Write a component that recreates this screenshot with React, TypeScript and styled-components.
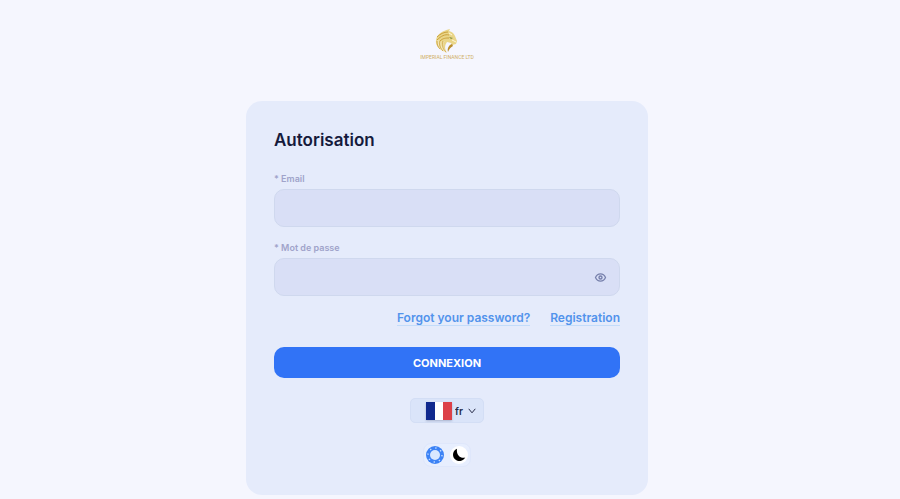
import React, { useState } from "react";
import { createGlobalStyle, styled } from "styled-components";

const GlobalStyle = createGlobalStyle`
  * {
    box-sizing: border-box;
  }
  body {
    margin: 0;
    background: #f5f6fe;
    color: #151a3c;
    font-family: Inter, "Liberation Sans", sans-serif;
  }
`;

const Page = styled.main`
  display: flex;
  flex-direction: column;
  align-items: center;
  gap: 40px;
  padding: 28px 6px 4px 0;
`;

const Logo = styled.div`
  display: flex;
  flex-direction: column;
  align-items: center;
  height: 33px;

  svg {
    width: 24px;
    height: 26px;
  }
`;

const LogoName = styled.span`
  color: #d0ae64;
  font-family: Roboto, sans-serif;
  font-size: 5px;
  line-height: 7px;
  white-space: nowrap;
`;

const Card = styled.form`
  width: 100%;
  max-width: 402px;
  padding: 28px;
  border-radius: 16px;
  background: #e5ebfb;
`;

const Title = styled.h1`
  margin: 0 0 22px;
  font-size: 17px;
  line-height: 22px;
  font-weight: 600;
`;

const Field = styled.div`
  margin-bottom: 15px;

  label {
    display: block;
    margin-bottom: 4px;
    color: #a0a3ca;
    font-size: 9px;
    line-height: 12px;
    font-weight: 600;
  }
`;

const InputWrap = styled.div`
  display: flex;
  align-items: center;
  height: 38px;
  border: 1px solid #cfd8ee;
  border-radius: 10px;
  background: #d9dff6;
`;

const Input = styled.input`
  flex: 1;
  min-width: 0;
  height: 100%;
  padding: 0 12px;
  border: 0;
  outline: none;
  background: transparent;
  color: inherit;
  font: inherit;
  font-size: 12px;
`;

const EyeButton = styled.button`
  display: flex;
  margin-right: 12px;
  padding: 0;
  border: 0;
  background: none;
  color: #7780ac;
  cursor: pointer;
`;

const Links = styled.nav`
  display: flex;
  justify-content: flex-end;
  gap: 20px;
  margin-bottom: 21px;

  a {
    border-bottom: 1px solid #c3dcfa;
    color: #5293ec;
    font-size: 12px;
    line-height: 14px;
    font-weight: 600;
    text-decoration: none;
  }
`;

const SubmitButton = styled.button`
  display: block;
  width: 100%;
  height: 31px;
  border: 0;
  border-radius: 10px;
  background: #3173f6;
  color: #fff;
  font: inherit;
  font-size: 11px;
  font-weight: 700;
  cursor: pointer;
`;

const Language = styled.div`
  display: flex;
  align-items: center;
  width: 74px;
  height: 25px;
  margin: 20px auto;
  padding: 0 7px 0 15px;
  border: 1px solid #d3def5;
  border-radius: 5px;
  background: #dae4f9;
`;

const Flag = styled.svg`
  flex: none;
  width: 26px;
  height: 18px;
  box-shadow: 0 1px 2px #a9b2cc;
`;

const LanguageSelect = styled.select`
  flex: 1;
  min-width: 0;
  padding: 0 0 0 3px;
  border: 0;
  outline: none;
  appearance: none;
  background: transparent;
  color: #252a46;
  font: inherit;
  font-size: 10px;
  font-weight: 600;
`;

const Themes = styled.div`
  display: flex;
  justify-content: space-between;
  width: 48px;
  height: 24px;
  margin: 0 auto;
  padding: 2px;
  border: 1px solid #dfe7fb;
  border-radius: 8px;
  background: #e7eefe;
`;

const ThemeButton = styled.button<{ $light?: boolean }>`
  display: flex;
  align-items: center;
  justify-content: center;
  width: 18px;
  height: 18px;
  padding: 0;
  border: 0;
  border-radius: 50%;
  background: ${(props) => (props.$light ? "#3c82f5" : "#fff")};
  cursor: pointer;
`;

const LionIcon = () => (
  <svg viewBox="0 0 24 26" fill="none" aria-hidden="true">
    <path
      d="M1 12C2 6 7 3 15 1l-1 2c4 1 5 3 6 5l2 5-1 3-4 1-1-2-4-1c-2 3-3 6 0 11C5 22 0 18 1 12z"
      fill="#e9d588"
    />
    <path
      d="M2 9c3-3 7-5 11-5M2 12c4-4 8-6 12-5M5 13c3-3 6-3 9-3"
      stroke="#c69b34"
      strokeWidth="0.9"
    />
    <path
      d="M3 12c0 5 1 7 4 10M6 13c-1 4 1 8 4 11M9 13c-2 4-1 8 2 11"
      stroke="#fbf3d9"
      strokeWidth="0.7"
    />
    <path
      d="M2 13c0 4 1 6 3 8M5 13c-1 4 0 7 3 10M8 13c-1 5 0 8 3 11"
      stroke="#c59a37"
      strokeWidth="0.7"
    />
    <path d="M13 24c-1-4 1-7 4-8l1 2c-2 1-4 3-5 6z" fill="#ba8d2d" />
    <path d="M14 5l3 2M17 12l4 2" stroke="#fff8d8" strokeWidth="1" />
    <path d="M14 9l4 1-2 1z" fill="#7b8b3d" />
  </svg>
);

const EyeIcon = () => (
  <svg width="13" height="13" viewBox="0 0 13 13" fill="none" stroke="currentColor">
    <path
      d="M1.5 6.5C2.6 4 4.3 2.9 6.5 2.9s3.9 1.1 5 3.6c-1.1 2.5-2.8 3.6-5 3.6s-3.9-1.1-5-3.6z"
      strokeWidth="1.3"
    />
    <circle cx="6.5" cy="6.5" r="1.5" strokeWidth="1.4" />
  </svg>
);

const SunIcon = () => (
  <svg width="18" height="18" viewBox="0 0 18 18">
    <circle cx="9" cy="9" r="5" fill="#d9e8ff" />
    <circle
      cx="9"
      cy="9"
      r="7"
      fill="none"
      stroke="#c3dcff"
      strokeWidth="1.4"
      strokeDasharray="1.4 4.1"
    />
  </svg>
);

const MoonIcon = () => (
  <svg width="14" height="14" viewBox="0 0 14 14">
    <path d="M5 .8A6.4 6.4 0 1 0 13.2 9.5C8.500 11 4 6.500 5 .8z" fill="#000" />
  </svg>
);

export default function App() {
  const [showPassword, setShowPassword] = useState(false);
  const [theme, setTheme] = useState("light");

  return (
    <>
      <GlobalStyle />
      <Page>
        <Logo>
          <LionIcon />
          <LogoName>IMPERIAL FINANCE LTD</LogoName>
        </Logo>
        <Card onSubmit={(e) => e.preventDefault()}>
          <Title>Autorisation</Title>
          <Field>
            <label htmlFor="email">* Email</label>
            <InputWrap>
              <Input id="email" type="email" required />
            </InputWrap>
          </Field>
          <Field>
            <label htmlFor="password">* Mot de passe</label>
            <InputWrap>
              <Input
                id="password"
                type={showPassword ? "text" : "password"}
                required
              />
              <EyeButton
                type="button"
                aria-label="Afficher le mot de passe"
                onClick={() => setShowPassword(!showPassword)}
              >
                <EyeIcon />
              </EyeButton>
            </InputWrap>
          </Field>
          <Links>
            <a href="#forgot">Forgot your password?</a>
            <a href="#registration">Registration</a>
          </Links>
          <SubmitButton type="submit">CONNEXION</SubmitButton>
          <Language>
            <Flag viewBox="0 0 26 18" aria-hidden="true">
              <path d="M0 0h9v18H0z" fill="#10298e" />
              <path d="M9 0h8v18H9z" fill="#fff" />
              <path d="M17 0h9v18h-9z" fill="#dc4048" />
            </Flag>
            <LanguageSelect aria-label="Langue" defaultValue="fr">
              <option value="fr">fr</option>
              <option value="en">en</option>
            </LanguageSelect>
            <svg width="8" height="6" viewBox="0 0 8 6" fill="none" stroke="#252a46">
              <path d="M.7.8 4 4.8 7.3.8" />
            </svg>
          </Language>
          <Themes>
            <ThemeButton
              $light
              type="button"
              aria-label="Thème clair"
              aria-pressed={theme === "light"}
              onClick={() => setTheme("light")}
            >
              <SunIcon />
            </ThemeButton>
            <ThemeButton
              type="button"
              aria-label="Thème sombre"
              aria-pressed={theme === "dark"}
              onClick={() => setTheme("dark")}
            >
              <MoonIcon />
            </ThemeButton>
          </Themes>
        </Card>
      </Page>
    </>
  );
}
